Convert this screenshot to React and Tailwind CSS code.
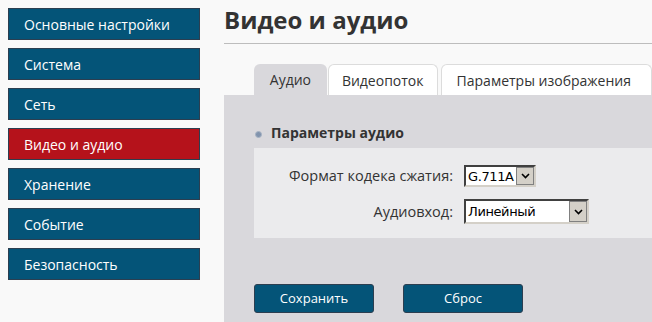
import React from "react";

const items = [
  "Основные настройки",
  "Система",
  "Сеть",
  "Видео и аудио",
  "Хранение",
  "Событие",
  "Безопасность",
];

function Select({ value, width, height }) {
  return (
    <div
      className="flex items-stretch bg-white border-t-2 border-l-2 border-b-2 border-r-2 border-t-[#404040] border-l-[#404040] border-b-[#d4d0c8] border-r-[#d4d0c8]"
      style={{ width, height }}
    >
      <div className="flex-1 flex items-center pl-[2px] text-[13px] tracking-[-0.4px] leading-none text-black" style={{ fontFamily: "'DejaVu Sans', sans-serif" }}>
        {value}
      </div>
      <div className="w-[18px] bg-[#d4d0c8] border border-[#808080] flex items-center justify-center">
        <svg width="9" height="6" viewBox="0 0 9 6">
          <path d="M1 1 L4.5 4.5 L8 1" fill="none" stroke="#000" strokeWidth="1.6" />
        </svg>
      </div>
    </div>
  );
}

export default function App() {
  return (
    <div className="w-[652px] h-[322px] bg-[#f9f9f9] flex overflow-hidden" style={{ fontFamily: "'Open Sans', sans-serif" }}>
      <div className="w-[200px] pl-2 pt-2 flex flex-col gap-2 shrink-0">
        {items.map((t) => (
          <div
            key={t}
            className={`h-[32px] border border-[#2c3e50] flex items-center pl-[15px] text-[14px] text-white ${t === "Видео и аудио" ? "bg-[#b5121b]" : "bg-[#045478]"}`}
          >
            {t}
          </div>
        ))}
      </div>
      <div className="ml-[24px] flex-1 flex flex-col min-w-0">
        <div className="h-[44px] border-b border-[#bdbdbd] flex items-start pt-[2px]">
          <h1 className="text-[24px] font-bold text-[#333] leading-[36px]">Видео и аудио</h1>
        </div>
        <div className="mt-[20px] pl-[30px] flex items-end gap-[1px] h-[31px] whitespace-nowrap">
          <div className="h-[31px] w-[75px] rounded-t-[6px] bg-[#d9d8dc] flex items-center justify-center text-[14px] text-[#333]">Аудио</div>
          <div className="h-[31px] w-[113px] rounded-t-[6px] bg-white border border-b-0 border-[#dcdcdc] flex items-center justify-center text-[14px] text-[#333]">Видеопоток</div>
          <div className="h-[31px] ml-[2px] rounded-t-[6px] bg-white border border-b-0 border-[#dcdcdc] flex items-center pl-[15px] pr-[20px] text-[14px] text-[#333]">Параметры изображения</div>
        </div>
        <div className="flex-1 bg-[#d9d8dc] flex flex-col">
          <div className="h-[53px] pl-[31px] flex items-end pb-[5px] gap-[9px]">
            <div className="w-[7px] h-[7px] rounded-full bg-[#8193ad] border border-[#a7b3c4] mb-[5px]"></div>
            <div className="text-[14px] font-bold text-[#333] leading-[20px]">Параметры аудио</div>
          </div>
          <div className="ml-[30px] h-[90px] bg-[#ebebed] flex flex-col pt-[17px]">
            <div className="flex items-center h-[22px]">
              <div className="w-[199px] text-right text-[14.5px] text-[#333]">Формат кодека сжатия:</div>
              <div className="ml-[11px]"><Select value="G.711A" width={72} height={22} /></div>
            </div>
            <div className="flex items-center h-[25px] mt-[12px]">
              <div className="w-[199px] text-right text-[14.5px] text-[#333]">Аудиовход:</div>
              <div className="ml-[11px]"><Select value="Линейный" width={125} height={25} /></div>
            </div>
          </div>
          <div className="pl-[30px] mt-[46px] flex gap-[29px]">
            <button className="w-[120px] h-[29px] rounded-[3px] bg-[#045478] border border-[#2c3e50] text-white text-[13px]">Сохранить</button>
            <button className="w-[120px] h-[29px] rounded-[3px] bg-[#045478] border border-[#2c3e50] text-white text-[13px]">Сброс</button>
          </div>
        </div>
      </div>
    </div>
  );
}
